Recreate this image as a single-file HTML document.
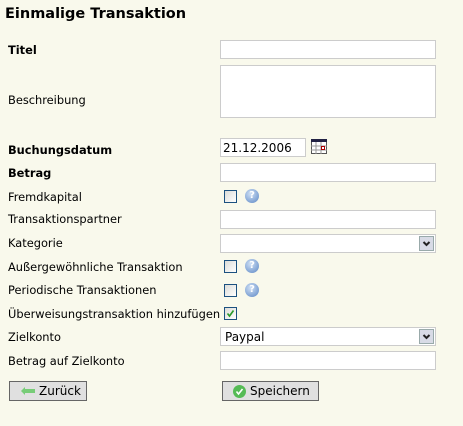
<!DOCTYPE html>
<html><head><meta charset="utf-8"><style>
body{margin:0;width:463px;height:426px;background:#f9f9ec;font-family:"DejaVu Sans",Verdana,sans-serif;font-size:11.4px;color:#000;position:relative;overflow:hidden}
.a{position:absolute}
.l{position:absolute;left:8px;line-height:14px}
.b{font-weight:bold}
.in{position:absolute;left:220px;width:214px;height:17px;background:#fff;border:1px solid #ccc}
.cb{position:absolute;left:224px;width:11px;height:11px;border:1px solid #1c5180;background:linear-gradient(135deg,#dcdcd8,#fff)}
.hp{position:absolute;left:245px;width:14px;height:14px;border-radius:50%;background:radial-gradient(circle at 40% 35%,#cfe0f5,#5b86c4);color:#fff;font-size:10px;font-weight:bold;text-align:center;line-height:14px}
.sel{position:absolute;right:1px;top:1px;width:15px;height:15px;background:#d8dbe6;border:1px solid #9aa;box-sizing:border-box}
.btn{position:absolute;top:381px;height:18px;background:#e0e0e0;border:1px solid #666;display:flex;align-items:center;font-size:12px}
</style></head><body>
<div class="a b" style="left:5px;top:6px;font-size:14.5px">Einmalige Transaktion</div>
<div class="l b" style="top:43px">Titel</div><div class="in" style="top:40px"></div>
<div class="l" style="top:93px">Beschreibung</div><div class="in" style="top:65px;height:51px"></div>
<div class="l b" style="top:143px">Buchungsdatum</div>
<div class="in" style="top:138px;line-height:18px;padding-left:2px;width:82px;font-size:12px">21.12.2006</div>
<svg class="a" style="left:311px;top:139px" width="16" height="15"><rect x="0.5" y="0.5" width="15" height="14" fill="#fff" stroke="#555"/><rect x="0" y="0" width="16" height="3" fill="#224"/><path d="M0 7H16M0 11H16M5 3V15M10 3V15" stroke="#999"/><rect x="10.5" y="7.5" width="3" height="3" fill="none" stroke="#a00"/></svg>
<div class="l b" style="top:166px">Betrag</div><div class="in" style="top:163px"></div>
<div class="l" style="top:190px">Fremdkapital</div><div class="cb" style="top:190px"></div><div class="hp" style="top:189px">?</div>
<div class="l" style="top:212px">Transaktionspartner</div><div class="in" style="top:210px"></div>
<div class="l" style="top:236px">Kategorie</div><div class="in" style="top:234px"><div class="sel"><svg width="13" height="13"><path d="M3.5 5L6.5 8L9.5 5" stroke="#222" stroke-width="2" fill="none"/></svg></div></div>
<div class="l" style="top:260px">Außergewöhnliche Transaktion</div><div class="cb" style="top:260px"></div><div class="hp" style="top:259px">?</div>
<div class="l" style="top:283px">Periodische Transaktionen</div><div class="cb" style="top:284px"></div><div class="hp" style="top:283px">?</div>
<div class="l" style="top:307px">Überweisungstransaktion hinzufügen</div><div class="cb" style="top:307px"><svg width="11" height="11" style="position:absolute;left:0;top:0"><path d="M2.5 5.5L4.5 8L8.5 2.5" stroke="#2a9a2a" stroke-width="1.6" fill="none"/></svg></div>
<div class="l" style="top:330px">Zielkonto</div><div class="in" style="top:327px;line-height:18px;font-size:12px"><span style="padding-left:4px">Paypal</span><div class="sel"><svg width="13" height="13"><path d="M3.5 5L6.5 8L9.5 5" stroke="#222" stroke-width="2" fill="none"/></svg></div></div>
<div class="l" style="top:354px">Betrag auf Zielkonto</div><div class="in" style="top:351px"></div>
<div class="btn" style="left:9px;width:76px"><svg width="16" height="10" style="margin-left:10px;margin-right:3px"><path d="M1 5L5 1V3H15V7H5V9Z" fill="#7c7"/></svg>Zurück</div>
<div class="btn" style="left:222px;width:95px"><span style="display:inline-block;width:13px;height:13px;border-radius:50%;background:#5b5;margin-left:10px;margin-right:4px;position:relative"><svg width="13" height="13" style="position:absolute;left:0;top:0"><path d="M3.5 6.5L5.5 9L9.5 4" stroke="#fff" stroke-width="1.6" fill="none"/></svg></span>Speichern</div>
</body></html>
